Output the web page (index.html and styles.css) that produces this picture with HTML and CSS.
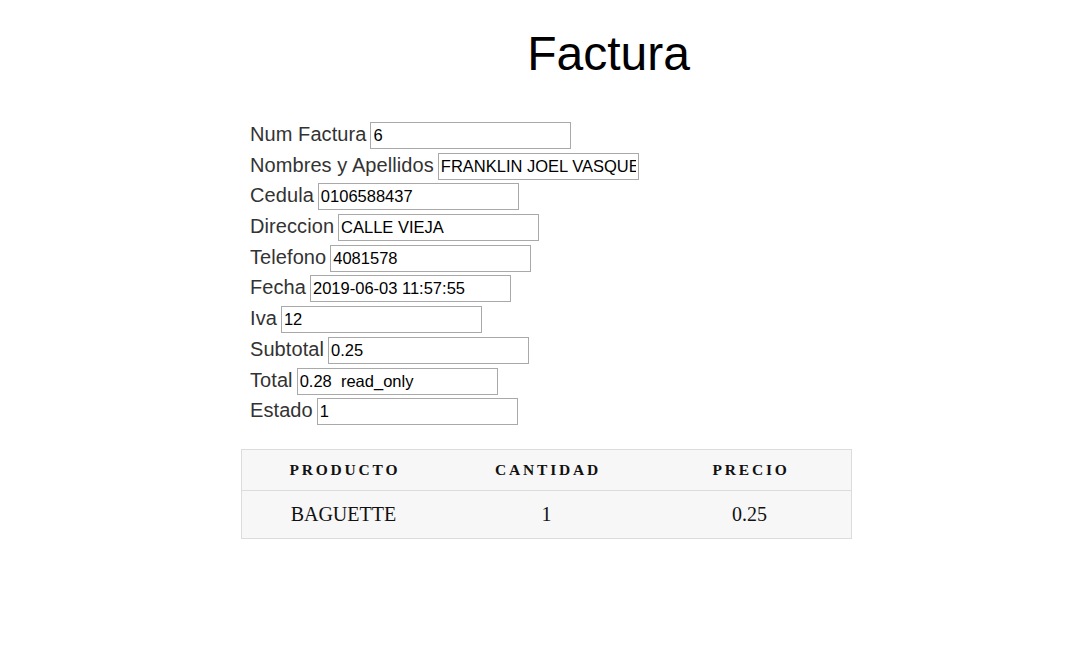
FILE: index.html
```html
<!DOCTYPE html>
<html lang="es">
<head>
<meta charset="utf-8">
<title>Factura</title>
<link rel="stylesheet" href="styles.css">
</head>
<body>
<h1 class="title">Factura</h1>
<form class="form">
  <div class="row"><label class="lbl">Num Factura</label><input class="field" type="text" value="6"></div>
  <div class="row"><label class="lbl">Nombres y Apellidos</label><input class="field" type="text" value="FRANKLIN JOEL VASQUEZ"></div>
  <div class="row"><label class="lbl">Cedula</label><input class="field" type="text" value="0106588437"></div>
  <div class="row"><label class="lbl">Direccion</label><input class="field" type="text" value="CALLE VIEJA"></div>
  <div class="row"><label class="lbl">Telefono</label><input class="field" type="text" value="4081578"></div>
  <div class="row"><label class="lbl">Fecha</label><input class="field" type="text" value="2019-06-03 11:57:55"></div>
  <div class="row"><label class="lbl">Iva</label><input class="field" type="text" value="12"></div>
  <div class="row"><label class="lbl">Subtotal</label><input class="field" type="text" value="0.25"></div>
  <div class="row"><label class="lbl">Total</label><input class="field" type="text" value="0.28  read_only"></div>
  <div class="row"><label class="lbl">Estado</label><input class="field" type="text" value="1"></div>
</form>
<table class="items">
  <thead>
    <tr><th>Producto</th><th>Cantidad</th><th>Precio</th></tr>
  </thead>
  <tbody>
    <tr><td>BAGUETTE</td><td>1</td><td>0.25</td></tr>
  </tbody>
</table>
</body>
</html>
```
FILE: styles.css
```css
html, body {
  margin: 0;
  padding: 0;
  background: #ffffff;
}

body {
  font-family: "Liberation Sans", Arial, sans-serif;
  color: #000;
}

.title {
  margin: 26px 0 0;
  padding-left: 141px;
  font-size: 48px;
  line-height: 55px;
  font-weight: normal;
  text-align: center;
  color: #000;
}

.form {
  margin: 41px 0 0 250px;
  display: flex;
  flex-direction: column;
}

.row {
  display: flex;
  align-items: baseline;
  gap: 4px;
  height: 30.7px;
}

.lbl {
  font-size: 20px;
  line-height: 23px;
  letter-spacing: 0.08px;
  color: #333;
  white-space: nowrap;
}

.field {
  box-sizing: border-box;
  width: 201px;
  height: 27px;
  margin: 0;
  padding: 1px 2px;
  border: 1px solid #a9a9a9;
  border-radius: 0;
  font-family: "Liberation Sans", Arial, sans-serif;
  font-size: 16.5px;
  color: #000;
  background: #fff;
}

.items {
  margin: 20px 0 0 241px;
  width: 611px;
  border-collapse: collapse;
  border: 1px solid #dcdcdc;
  background: #f7f7f7;
  table-layout: fixed;
  font-family: "Liberation Serif", "Times New Roman", serif;
  color: #111;
}

.items th {
  height: 40px;
  padding: 0 0 0 3px;
  font-size: 15.5px;
  font-weight: bold;
  letter-spacing: 2.8px;
  text-transform: uppercase;
  text-align: center;
  vertical-align: middle;
  border-bottom: 1px solid #dcdcdc;
}

.items td {
  height: 47px;
  padding: 0;
  font-size: 20px;
  text-align: center;
  vertical-align: middle;
}
```
